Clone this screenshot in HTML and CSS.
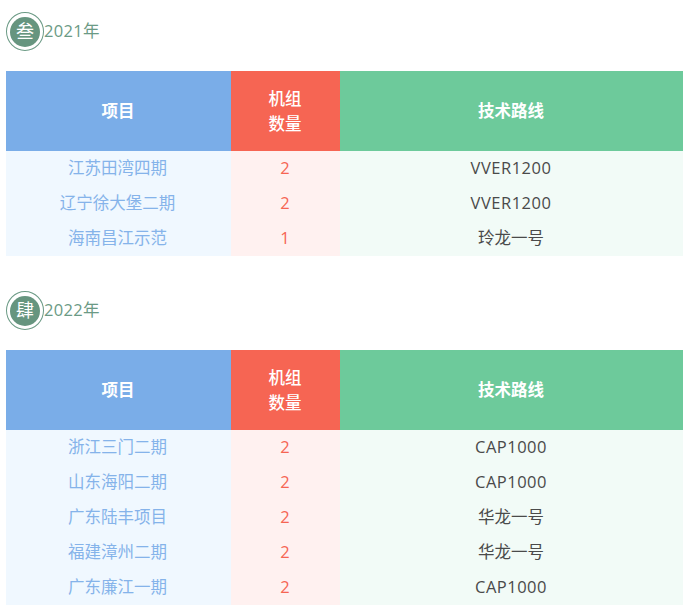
FILE: index.html
```html
<!DOCTYPE html>
<html lang="zh">
<head>
<meta charset="utf-8">
<title>2021-2022</title>
<link rel="stylesheet" href="styles.css">
</head>
<body>
<section class="year">
  <h2 class="heading"><span class="ring"><span class="seal">叁</span></span><span class="label">2021年</span></h2>
  <table class="plan">
    <colgroup><col class="c1"><col class="c2"><col class="c3"></colgroup>
    <thead><tr><th class="h1">项目</th><th class="h2">机组<br>数量</th><th class="h3">技术路线</th></tr></thead>
    <tbody>
      <tr><td class="d1">江苏田湾四期</td><td class="d2">2</td><td class="d3 en">VVER1200</td></tr>
      <tr><td class="d1">辽宁徐大堡二期</td><td class="d2">2</td><td class="d3 en">VVER1200</td></tr>
      <tr><td class="d1">海南昌江示范</td><td class="d2">1</td><td class="d3">玲龙一号</td></tr>
    </tbody>
  </table>
</section>
<section class="year">
  <h2 class="heading"><span class="ring"><span class="seal">肆</span></span><span class="label">2022年</span></h2>
  <table class="plan">
    <colgroup><col class="c1"><col class="c2"><col class="c3"></colgroup>
    <thead><tr><th class="h1">项目</th><th class="h2">机组<br>数量</th><th class="h3">技术路线</th></tr></thead>
    <tbody>
      <tr><td class="d1">浙江三门二期</td><td class="d2">2</td><td class="d3 en">CAP1000</td></tr>
      <tr><td class="d1">山东海阳二期</td><td class="d2">2</td><td class="d3 en">CAP1000</td></tr>
      <tr><td class="d1">广东陆丰项目</td><td class="d2">2</td><td class="d3">华龙一号</td></tr>
      <tr><td class="d1">福建漳州二期</td><td class="d2">2</td><td class="d3">华龙一号</td></tr>
      <tr><td class="d1">广东廉江一期</td><td class="d2">2</td><td class="d3 en">CAP1000</td></tr>
    </tbody>
  </table>
</section>
</body>
</html>
```
FILE: styles.css
```css
html, body { margin: 0; padding: 0; background: #fff; }
body {
  padding: 12px 11px 0 6px;
  font-family: "Open Sans", "Noto Sans CJK SC", sans-serif;
  font-size: 16.5px;
  color: #444;
}
.year { margin-bottom: 35px; }
.heading {
  display: flex;
  align-items: center;
  height: 39px;
  margin: 0 0 20px;
  font-size: 16.5px;
  font-weight: 400;
  color: #6b9a85;
}
.label {
  padding-bottom: 3px;
  letter-spacing: 0.3px;
}
.ring {
  box-sizing: border-box;
  width: 38px;
  height: 39px;
  border: 1px solid #6b9a85;
  border-radius: 50%;
  display: flex;
  align-items: center;
  justify-content: center;
}
.seal {
  width: 30px;
  height: 30px;
  border-radius: 50%;
  background: #66957f;
  color: #fff;
  font-size: 18px;
  line-height: 29px;
  text-align: center;
}
.plan {
  width: 677px;
  border-collapse: collapse;
  table-layout: fixed;
}
.c1 { width: 225px; }
.c2 { width: 109px; }
.c3 { width: 343px; }
th {
  height: 78px;
  padding: 0 1px 2px 0;
  color: #fff;
  font-size: 16.5px;
  line-height: 25px;
  font-weight: 700;
  text-align: center;
}
.h1 { background: #7aade8; }
.h2 { background: #f66553; font-weight: 500; padding-bottom: 0; height: 80px; }
.h3 { background: #6dca9b; }
td {
  height: 33px;
  padding: 0 0 2px;
  font-size: 16.5px;
  line-height: 24px;
  text-align: center;
}
.d1 { background: #f0f8ff; color: #85b3ea; padding-right: 2px; }
.d2 { background: #fff1f0; color: #f66553; padding-right: 1px; }
.d3 { background: #f2fbf7; color: #4a4a4a; padding-right: 1px; }
.en { letter-spacing: 0.5px; }
```
